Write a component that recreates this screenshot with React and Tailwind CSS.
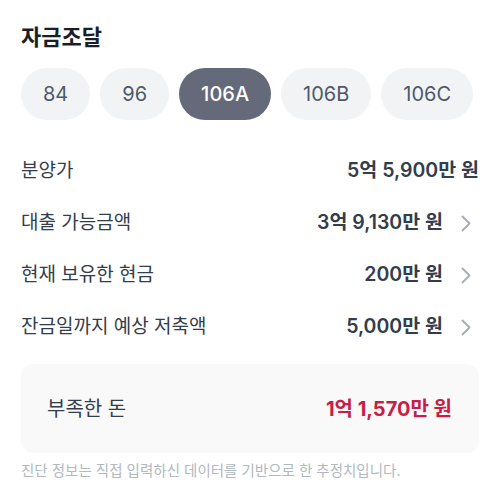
import React from "react";

const font = { fontFamily: 'Inter, "Noto Sans CJK KR", sans-serif' };

function Chevron() {
  return (
    <svg width="10" height="17" viewBox="0 0 10 17" className="ml-[18px] mr-[8px] shrink-0">
      <path d="M1.5 1.5 L8.5 8.5 L1.5 15.5" fill="none" stroke="#a9aeb7" strokeWidth="2" strokeLinecap="round" strokeLinejoin="round" />
    </svg>
  );
}

function Row({ label, value, chevron }) {
  return (
    <div className="flex items-center justify-between h-[52px]">
      <span className="text-[19px] text-[#333d4b]">{label}</span>
      <div className="flex items-center">
        <span className="text-[19.5px] font-semibold text-[#333d4b]">{value}</span>
        {chevron && <Chevron />}
      </div>
    </div>
  );
}

export default function App() {
  const chips = ["84", "96", "106A", "106B", "106C"];
  return (
    <div className="w-[500px] h-[502px] bg-white px-[21px] pt-[23px]" style={font}>
      <h1 className="text-[22px] leading-[28px] font-bold text-[#191f28]">자금조달</h1>
      <div className="flex gap-[10px] mt-[17px]">
        {chips.map((c) => (
          <div
            key={c}
            className={
              "h-[52px] px-[22px] rounded-full flex items-center justify-center text-[20px] " +
              (c === "106A" ? "bg-[#646a7a] text-white font-medium" : "bg-[#f2f3f5] text-[#4e5968]")
            }
          >
            {c}
          </div>
        ))}
      </div>
      <div className="mt-[25px]">
        <Row label="분양가" value="5억 5,900만 원" />
        <Row label="대출 가능금액" value="3억 9,130만 원" chevron />
        <Row label="현재 보유한 현금" value="200만 원" chevron />
        <Row label="잔금일까지 예상 저축액" value="5,000만 원" chevron />
      </div>
      <div className="mt-[11px] h-[89px] rounded-xl bg-[#f9f9fa] flex items-center justify-between pl-[26px] pr-[27px]">
        <span className="text-[20px] text-[#333d4b]">부족한 돈</span>
        <span className="text-[20px] font-bold text-[#c81e45]">1억 1,570만 원</span>
      </div>
      <p className="mt-[8px] text-[14.5px] leading-[20px] text-[#b0b8c1]">진단 정보는 직접 입력하신 데이터를 기반으로 한 추정치입니다.</p>
    </div>
  );
}
